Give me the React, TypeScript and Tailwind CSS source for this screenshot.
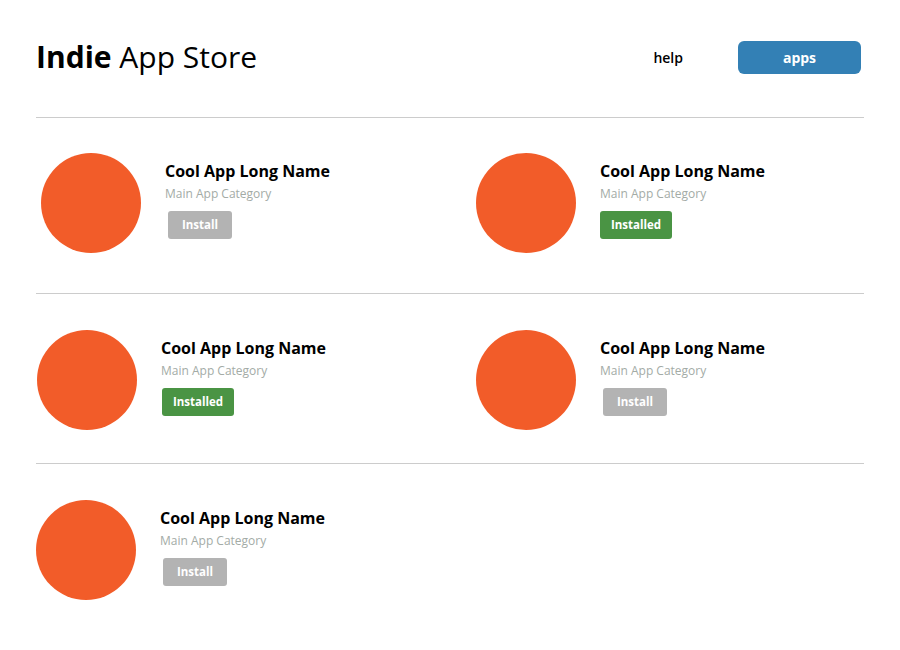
import React from "react";

type App = {
  pl: string;
  installed: boolean;
  btnMl: string;
};

const rows: { pad: string; border: boolean; apps: App[] }[] = [
  {
    pad: "pt-[35px] pb-[40px]",
    border: true,
    apps: [
      { pl: "pl-[5px]", installed: false, btnMl: "ml-[3px]" },
      { pl: "pl-[26px]", installed: true, btnMl: "ml-0" },
    ],
  },
  {
    pad: "pt-[36px] pb-[33px]",
    border: true,
    apps: [
      { pl: "pl-[1px]", installed: true, btnMl: "ml-[1px]" },
      { pl: "pl-[26px]", installed: false, btnMl: "ml-[3px]" },
    ],
  },
  {
    pad: "pt-[36px] pb-[36px]",
    border: false,
    apps: [{ pl: "pl-0", installed: false, btnMl: "ml-[3px]" }],
  },
];

function AppItem({ app }: { app: App }) {
  return (
    <div className={`flex items-start gap-[24px] ${app.pl}`}>
      <div className="w-[100px] h-[100px] rounded-full bg-[#f25c29] shrink-0" />
      <div className="pt-[7px] flex flex-col items-start">
        <p className="text-[16px] leading-[22px] font-bold text-black">
          Cool App Long Name
        </p>
        <p className="mt-[3px] text-[12px] leading-[18px] text-[#a3aba6]">
          Main App Category
        </p>
        {app.installed ? (
          <button
            className={`mt-[8px] ${app.btnMl} w-[72px] h-[28px] rounded-[3px] bg-[#4a9444] text-white text-[11.5px] font-bold`}
          >
            Installed
          </button>
        ) : (
          <button
            className={`mt-[8px] ${app.btnMl} w-[64px] h-[28px] rounded-[3px] bg-[#b3b3b3] text-white text-[11.5px] font-bold`}
          >
            Install
          </button>
        )}
      </div>
    </div>
  );
}

export default function App() {
  return (
    <div
      className="w-[900px] h-[650px] bg-white"
      style={{ fontFamily: '"Open Sans", sans-serif' }}
    >
      {/* Header */}
      <div className="h-[118px] mx-[36px] border-b border-[#cccccc] flex justify-between">
        <h1 className="mt-[36px] text-[30px] leading-[42px] text-black">
          <span className="font-bold">Indie</span> App Store
        </h1>
        <div className="mt-[41px] mr-[3px] flex items-center h-[33px]">
          <a className="text-[14px] font-semibold text-black mr-[55px]">help</a>
          <button className="w-[123px] h-[33px] rounded-[6px] bg-[#3380b5] text-white text-[14px] font-bold">
            apps
          </button>
        </div>
      </div>

      {/* App list */}
      <div className="mx-[36px]">
        {rows.map((row, i) => (
          <div
            key={i}
            className={`grid grid-cols-2 ${row.pad} ${row.border ? "border-b border-[#cccccc]" : ""}`}
          >
            {row.apps.map((app, j) => (
              <AppItem key={j} app={app} />
            ))}
          </div>
        ))}
      </div>
    </div>
  );
}
